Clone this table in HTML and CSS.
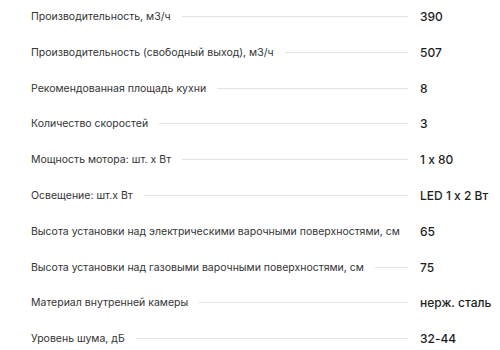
FILE: index.html
```html
<!DOCTYPE html>
<html lang="ru">
<head>
<meta charset="utf-8">
<link rel="stylesheet" href="styles.css">
</head>
<body>
<div class="specs">
  <div class="row"><div class="name"><span class="label">Производительность, м3/ч</span><span class="dots"></span></div><div class="value">390</div></div>
  <div class="row"><div class="name"><span class="label">Производительность (свободный выход), м3/ч</span><span class="dots"></span></div><div class="value">507</div></div>
  <div class="row"><div class="name"><span class="label">Рекомендованная площадь кухни</span><span class="dots"></span></div><div class="value">8</div></div>
  <div class="row"><div class="name"><span class="label">Количество скоростей</span><span class="dots"></span></div><div class="value">3</div></div>
  <div class="row"><div class="name"><span class="label">Мощность мотора: шт. х Вт</span><span class="dots"></span></div><div class="value">1 x 80</div></div>
  <div class="row"><div class="name"><span class="label">Освещение: шт.х Вт</span><span class="dots"></span></div><div class="value">LED 1 x 2 Вт</div></div>
  <div class="row"><div class="name"><span class="label">Высота установки над электрическими варочными поверхностями, см</span><span class="dots"></span></div><div class="value">65</div></div>
  <div class="row"><div class="name"><span class="label">Высота установки над газовыми варочными поверхностями, см</span><span class="dots"></span></div><div class="value">75</div></div>
  <div class="row"><div class="name"><span class="label">Материал внутренней камеры</span><span class="dots"></span></div><div class="value">нерж. сталь</div></div>
  <div class="row"><div class="name"><span class="label">Уровень шума, дБ</span><span class="dots"></span></div><div class="value">32-44</div></div>
</div>
</body>
</html>
```
FILE: styles.css
```css
html, body {
  margin: 0;
  padding: 0;
  background: #ffffff;
}
body {
  font-family: Inter, "Noto Sans", sans-serif;
  font-feature-settings: "calt" 0;
  overflow: hidden;
}
.specs {
  display: flex;
  flex-direction: column;
  padding-left: 31px;
  margin-top: -1.4px;
}
.row {
  display: grid;
  grid-template-columns: 1fr 80px;
  align-items: center;
  height: 35.8px;
}
.name {
  display: flex;
  align-items: center;
  min-width: 0;
}
.label {
  font-size: 10.5px;
  color: #333333;
  white-space: nowrap;
}
.dots {
  flex: 1;
  height: 1px;
  background: #e3e3e3;
  margin: 0 12px 0 11px;
}
.value {
  font-size: 12px;
  font-weight: 500;
  color: #1e1e1e;
  white-space: nowrap;
}
```
